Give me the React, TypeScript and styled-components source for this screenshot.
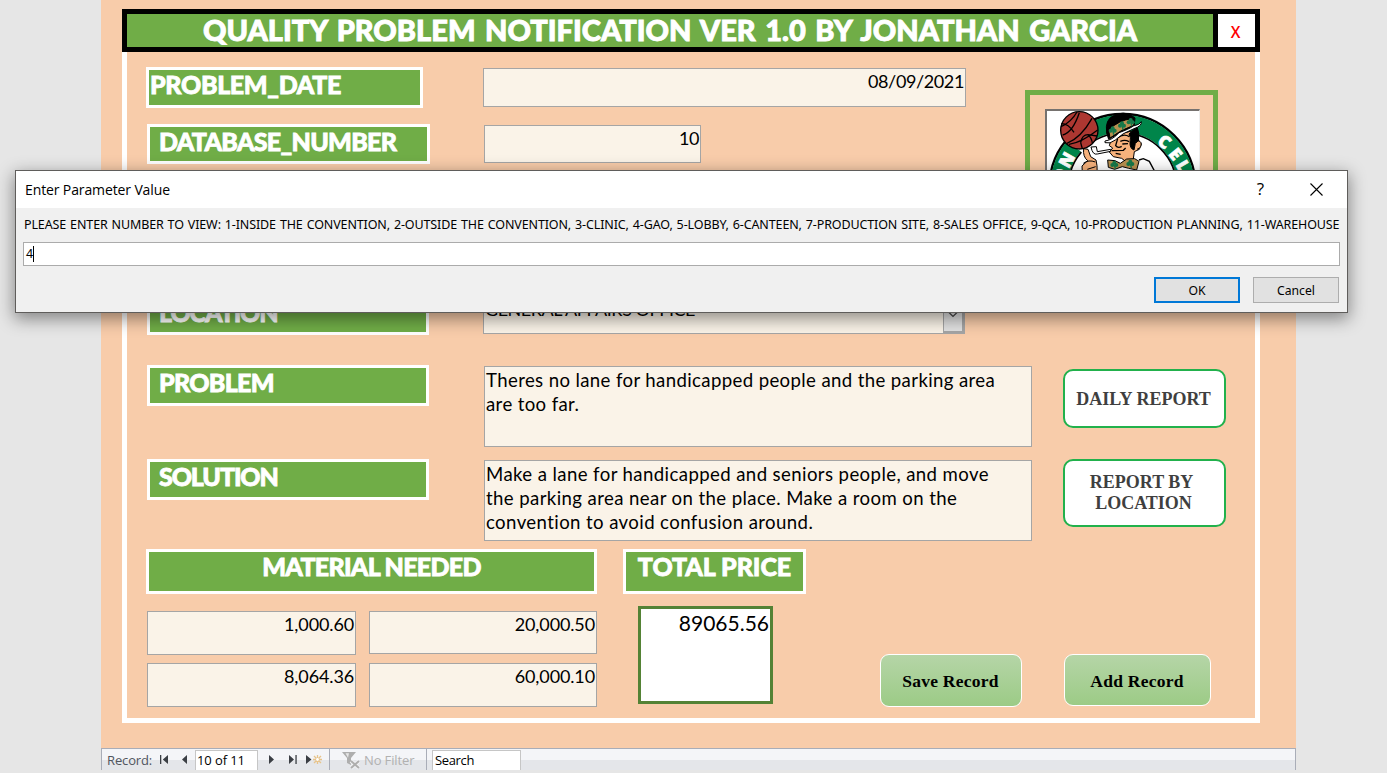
import React from 'react';
import styled, { createGlobalStyle } from 'styled-components';

const GlobalStyle = createGlobalStyle`
  * { box-sizing: border-box; }
  body { margin: 0; background: #e6e6e6; overflow: hidden; }
`;

const calibri = 'Lato, "Open Sans", sans-serif';
const segoe = '"Open Sans", "Noto Sans", sans-serif';
const tahoma = '"Noto Sans", "DejaVu Sans", sans-serif';

const Workspace = styled.div`
  position: relative;
  width: 1387px;
  height: 773px;
  padding-left: 101px;
  background: #e6e6e6;
  overflow: hidden;
`;

const Form = styled.main`
  width: 1195px;
  height: 748px;
  padding: 9px 36px 0 21px;
  background: #f8ccaa;
`;

const Header = styled.header`
  display: flex;
  gap: 5px;
  height: 43px;
  padding: 5px;
  background: #000;
`;

const Title = styled.h1`
  flex: 1;
  margin: 0;
  background: #70ad47;
  color: #fff;
  font: 900 29px/32px ${calibri};
  letter-spacing: 0;
  word-spacing: 2.6px;
  text-align: center;
  white-space: nowrap;
  -webkit-text-stroke: 0.9px #fff;
`;

const CloseForm = styled.button`
  width: 37px;
  padding: 2px 2px 0 0;
  border: 0;
  background: #fff;
  color: #f00;
  font: 600 15.5px/20px ${segoe};
`;

const Body = styled.section`
  display: flex;
  height: 671px;
  padding-top: 15px;
  border: 5px solid #fff;
  border-top: 0;
`;

const Records = styled.div`
  flex: none;
  width: 898px;
  padding-left: 19px;
`;

const Side = styled.aside`
  flex: 1;
  display: flex;
  flex-direction: column;
  align-items: flex-start;
  padding-top: 23px;
`;

const Row = styled.div<{ $h: number; $indent?: number }>`
  display: flex;
  align-items: flex-start;
  height: ${(p) => p.$h}px;
  padding-left: ${(p) => p.$indent ?? 0}px;
`;

const Label = styled.div<{ $w: number; $h: number; $pad?: number; $track?: number; $center?: boolean }>`
  flex: none;
  width: ${(p) => p.$w}px;
  height: ${(p) => p.$h}px;
  padding-left: ${(p) => p.$pad ?? 0}px;
  border: 3px solid #fff;
  background: #70ad47;
  color: #fff;
  font: 900 25px/29px ${calibri};
  letter-spacing: ${(p) => p.$track ?? -0.7}px;
  text-align: ${(p) => (p.$center ? 'center' : 'left')};
  white-space: nowrap;
  -webkit-text-stroke: 0.8px #fff;
`;

const Field = styled.div<{ $w: number; $h: number; $gap?: number; $right?: boolean; $track?: number }>`
  flex: none;
  width: ${(p) => p.$w}px;
  height: ${(p) => p.$h}px;
  margin: 1px 0 0 ${(p) => p.$gap ?? 0}px;
  padding: 0 1px;
  border: 1px solid #a5a5a5;
  background: #faf3e8;
  color: #000;
  font: 400 18px/24px ${calibri};
  letter-spacing: ${(p) => p.$track ?? 0}px;
  text-align: ${(p) => (p.$right ? 'right' : 'left')};
  white-space: pre;
`;

const Memo = styled(Field)`
  padding-top: 1px;
  font-size: 18.6px;
`;

const Combo = styled(Field)`
  display: flex;
  justify-content: space-between;
  padding-right: 0;
`;

const ComboArrow = styled.span`
  display: flex;
  justify-content: center;
  align-items: center;
  width: 21px;
  border: 1px solid #a5a5a5;
  border-right-width: 2px;
  border-bottom-width: 2px;
  background: #e1e1e1;
`;

const Amounts = styled.div`
  display: grid;
  grid-template-columns: 209px 228px;
  align-content: start;
  gap: 7px 13px;
  width: 451px;
  padding: 4px 0 0 1px;
`;

const Total = styled.output`
  width: 135px;
  height: 98px;
  margin-left: 41px;
  padding-right: 1px;
  border: 3px solid #548235;
  background: #fff;
  font: 400 21px/28px ${calibri};
  text-align: right;
`;

const LogoFrame = styled.div`
  width: 193px;
  height: 193px;
  padding: 14px 15px;
  border: 5px solid #70ad47;
`;

const LogoImage = styled.div`
  width: 155px;
  height: 155px;
  border: 1px solid #f0f0f0;
  border-top: 2px solid #76726f;
  border-left: 2px solid #76726f;
  background: #fff;
  overflow: hidden;
`;

const ReportButton = styled.button<{ $h: number; $top: number; $nudge?: number }>`
  width: 163px;
  height: ${(p) => p.$h}px;
  margin: ${(p) => p.$top}px 0 0 38px;
  padding: ${(p) => p.$nudge ?? 0}px 2px 0 0;
  border: 2px solid #22b14c;
  border-radius: 10px;
  background: #fff;
  color: #3f3f3f;
  font: 700 18px/21px "Liberation Serif", serif;
  white-space: pre;
`;

const ActionButton = styled.button<{ $w: number; $h: number; $left: number; $top: number }>`
  width: ${(p) => p.$w}px;
  height: ${(p) => p.$h}px;
  margin: ${(p) => p.$top}px 0 0 ${(p) => p.$left}px;
  padding: 1px 1px 0 0;
  border: 1px solid #fff;
  border-radius: 9px;
  background: linear-gradient(#b5d5a7, #9ccb86);
  color: #000;
  font: 700 17.5px/20px "Liberation Serif", serif;
  letter-spacing: 0.25px;
  white-space: nowrap;
`;

const NavBar = styled.nav`
  display: flex;
  align-items: stretch;
  width: 1195px;
  height: 22px;
  border: 1px solid #a9adb8;
  border-bottom: 0;
  background: linear-gradient(#f4f5f8 0 11px, #e4e6ea 11px);
  font: 400 13px/22px ${segoe};
  letter-spacing: -0.13px;
  color: #000;
  white-space: nowrap;
`;

const NavText = styled.span<{ $w: number; $muted?: boolean }>`
  width: ${(p) => p.$w}px;
  color: ${(p) => (p.$muted ? '#b1b1b1' : '#50555f')};
`;

const NavBox = styled.span<{ $w: number; $gap?: number; $track?: number; $pad?: number }>`
  width: ${(p) => p.$w}px;
  margin: 1px 0 0 ${(p) => p.$gap ?? 0}px;
  padding-left: ${(p) => p.$pad ?? 1}px;
  border: 1px solid #c6c6c6;
  border-bottom: 0;
  background: #fff;
  letter-spacing: ${(p) => p.$track ?? -0.1}px;
  line-height: 18px;
`;

const NavIcon = styled.svg`
  flex: none;
  height: 21px;
`;

const Divider = styled.i`
  width: 1px;
  background: #a9adb8;
`;

const Dialog = styled.div`
  position: absolute;
  left: 15px;
  top: 170px;
  width: 1333px;
  height: 143px;
  border: 1px solid #5f5d5b;
  background: #f0f0f0;
  box-shadow: 0 5px 16px 1px rgba(0, 0, 0, 0.42);
  color: #000;
  font: 400 12.5px/18px ${tahoma};
`;

const DialogTitle = styled.div`
  display: flex;
  align-items: center;
  height: 37px;
  padding: 0 24px 0 9px;
  background: #fff;
  font: 400 14px/20px ${segoe};
  letter-spacing: -0.12px;
`;

const HelpMark = styled.span`
  margin: -2px 46px 0 auto;
  font-size: 17px;
`;

const Prompt = styled.div`
  height: 34px;
  padding: 8px 0 0 8px;
  letter-spacing: -0.12px;
  word-spacing: 0.82px;
  white-space: nowrap;
`;

const Entry = styled.div`
  display: flex;
  align-items: center;
  width: 1317px;
  height: 24px;
  margin-left: 7px;
  padding-left: 2px;
  border: 1px solid #ababab;
  background: #fff;
`;

const Caret = styled.i`
  width: 1px;
  height: 16px;
  background: #000;
`;

const DialogActions = styled.div`
  display: flex;
  justify-content: flex-end;
  gap: 13px;
  padding: 11px 8px 0 0;
`;

const DialogButton = styled.button<{ $primary?: boolean }>`
  width: 86px;
  height: 26px;
  padding: 2px 0 0;
  border: ${(p) => (p.$primary ? '2px solid #0078d7' : '1px solid #adadad')};
  background: #e1e1e1;
  color: #000;
  font: 400 12.2px/18px ${tahoma};
`;

function TeamLogo() {
  return (
    <svg width="152" height="152" viewBox="141 333 456 456">
      <circle cx="367.5" cy="561" r="219" fill="#fff" stroke="#000" strokeWidth="7" />
      <circle cx="367.5" cy="561" r="190" fill="none" stroke="#00854a" strokeWidth="52" />
      <circle cx="367.5" cy="561" r="162" fill="#fff" stroke="#000" strokeWidth="5" />
      <g
        fill="#fff"
        stroke="#fff"
        strokeWidth="2"
        fontFamily='"Open Sans", sans-serif'
        fontWeight="800"
        fontSize="52"
        textAnchor="middle"
      >
        <text transform="translate(217 489) rotate(-61)">N</text>
        <text transform="translate(198 532) rotate(-72)">O</text>
        <text transform="translate(482 440) rotate(37)">C</text>
        <text transform="translate(512 474) rotate(51)">E</text>
        <text transform="translate(533 507) rotate(60)">L</text>
      </g>
      <g stroke="#000" strokeWidth="3">
        <path d="M205 430 L262 430 L330 425 L320 462 L262 475 L240 452Z" fill="#fff" stroke="none" />
        <path d="M251 446 Q248 470 263 482 L246 498 L248 540 L292 540 L291 497 L288 480 L272 470 L264 448Z" fill="#f7b27c" />
        <path d="M250 490 Q266 478 286 486 M262 508 L287 500 M254 526 L284 512" fill="none" />
        <path d="M384 480 L424 472 L430 482 L448 478 L468 520 L340 540 L318 500Z" fill="#fff" stroke="none" />
        <path d="M417 480 L430 476 L448 484 L464 514" fill="none" strokeWidth="4" />
        <circle cx="238" cy="391" r="56" fill="#ad3731" strokeWidth="4" />
        <path d="M183 380 Q213 367 231 336 M188 405 Q218 397 238 338 M184 371 Q204 370 222 397 M201 430 Q243 413 276 355 M207 433 Q244 428 293 390 M242 428 Q246 404 264 404 L291 408 M242 428 L247 446 M264 404 Q275 413 277 429" fill="none" strokeWidth="4" />
        <path d="M333 420 L328 437 L338 444 L328 456 L340 470 L365 475 L378 485 L399 483 L403 455 L418 448 L424 432 L416 421 L411 390 L360 401Z" fill="#f7b27c" />
        <path d="M387 402 L411 380 Q420 401 415 423 L407 425 L402 450 Q389 446 390 426 Q394 413 387 402Z" fill="#000" />
        <path d="M407 430 Q416 417 423 428 Q426 443 411 448" fill="#f7b27c" />
        <path d="M352 414 Q370 399 388 410 M361 424 Q375 418 387 425 M367 432 L384 431 M353 416 L347 437 Q354 446 365 439 M335 452 L370 451 L377 444 M347 460 L362 463" fill="none" strokeWidth="4" />
        <path d="M273 441 L289 440 L292 455 L332 448 L332 454 L292 462 Q278 466 273 441Z" fill="#fff" />
        <path d="M320 399 Q314 357 343 346 Q371 333 394 346 L405 354 L403 374 L360 398 L326 418Z" fill="#000" />
        <path d="M326 390 Q356 360 397 356 L402 376 Q366 387 330 414Z" fill="#b99150" />
        <path d="M315 423 Q338 420 357 398 Q388 387 400 378 Q420 374 424 365 Q426 378 402 386 Q365 400 346 420 Q330 433 315 428Z" fill="#fff" />
        <path d="M323 480 L345 482 L361 490 L380 477 L404 476 L417 484 L410 510 L386 505 L367 500 L344 508 L325 502Z" fill="#b99150" />
      </g>
      <g fill="#16794a">
        {[[338, 391], [366, 376], [392, 366], [343, 494], [391, 491]].map(([x, y]) => (
          <g key={`${x}-${y}`}>
            <circle cx={x - 6} cy={y + 1} r="6" />
            <circle cx={x + 6} cy={y + 1} r="6" />
            <circle cx={x} cy={y - 6} r="6" />
            <path d={`M${x - 2} ${y} h5 l2 13 h-4Z`} />
          </g>
        ))}
      </g>
    </svg>
  );
}

export default function App() {
  return (
    <Workspace>
      <GlobalStyle />
      <Form>
        <Header>
          <Title>QUALITY PROBLEM NOTIFICATION VER 1.0 BY JONATHAN GARCIA</Title>
          <CloseForm>X</CloseForm>
        </Header>
        <Body>
          <Records>
            <Row $h={57}>
              <Label $w={277} $h={41} $pad={1} $track={-0.34}>PROBLEM_DATE</Label>
              <Field $w={483} $h={39} $gap={60} $right $track={-0.38}>08/09/2021</Field>
            </Row>
            <Row $h={171} $indent={1}>
              <Label $w={283} $h={40} $pad={9}>DATABASE_NUMBER</Label>
              <Field $w={217} $h={38} $gap={54} $right $track={-0.4}>10</Field>
            </Row>
            <Row $h={70} $indent={1}>
              <Label $w={282} $h={40} $pad={9} $track={-1.1}>LOCATION</Label>
              <Combo $w={482} $h={38} $gap={54} $track={-0.48}>
                GENERAL AFFAIRS OFFICE
                <ComboArrow>
                  <svg width="10" height="7" viewBox="0 0 10 7">
                    <path d="M1 1.5 L5 5.5 L9 1.5" fill="none" stroke="#444" strokeWidth="1.2" />
                  </svg>
                </ComboArrow>
              </Combo>
            </Row>
            <Row $h={94} $indent={1}>
              <Label $w={282} $h={41} $pad={9} $track={-0.7}>PROBLEM</Label>
              <Memo $w={548} $h={81} $gap={55} $track={0.375}>
                {'Theres no lane for handicapped people and the parking area\nare too far.'}
              </Memo>
            </Row>
            <Row $h={90} $indent={1}>
              <Label $w={282} $h={41} $pad={9} $track={-1.1}>SOLUTION</Label>
              <Memo $w={548} $h={81} $gap={55} $track={0.4}>
                {'Make a lane for handicapped and seniors people, and move\nthe parking area near on the place. Make a room on the\nconvention to avoid confusion around.'}
              </Memo>
            </Row>
            <Row $h={57}>
              <Label $w={451} $h={45} $center>MATERIAL NEEDED</Label>
              <Row $h={45} $indent={26}>
                <Label $w={183} $h={45} $center $track={-0.04}>TOTAL PRICE</Label>
              </Row>
            </Row>
            <Row $h={101}>
              <Amounts>
                <Field $w={209} $h={44} $right $track={-0.13}>1,000.60</Field>
                <Field $w={228} $h={43} $right $track={-0.13}>20,000.50</Field>
                <Field $w={209} $h={44} $right $track={-0.13}>8,064.36</Field>
                <Field $w={228} $h={44} $right $track={-0.13}>60,000.10</Field>
              </Amounts>
              <Total>89065.56</Total>
              <ActionButton $w={142} $h={53} $left={107} $top={48}>Save Record</ActionButton>
            </Row>
          </Records>
          <Side>
            <LogoFrame>
              <LogoImage>
                <TeamLogo />
              </LogoImage>
            </LogoFrame>
            <ReportButton $h={59} $top={86} $nudge={2}>DAILY REPORT</ReportButton>
            <ReportButton $h={68} $top={31}>{'REPORT BY \n LOCATION '}</ReportButton>
            <ActionButton $w={147} $h={52} $left={39} $top={127}>Add Record</ActionButton>
          </Side>
        </Body>
      </Form>
      <NavBar>
        <NavIcon width="5" />
        <NavText $w={50}>Record:</NavText>
        <NavIcon width="38" viewBox="0 0 38 21" fill="#3b3f45">
          <path d="M3 6h1.3v9H3zM11 6v9L5.8 10.5zM30 6v9l-5-4.5z" />
        </NavIcon>
        <NavBox $w={63}>10 of 11</NavBox>
        <NavIcon width="71" viewBox="0 0 71 21" fill="#3b3f45">
          <path d="M11 6v9l5-4.5zM31 6v9l5-4.5zM37.4 6h1.3v9h-1.3zM48 6v9l5.5-4.5z" />
          <path
            d="M59.5 6v9M55 10.5h9M56 7l7 7M63 7l-7 7"
            stroke="#e7c48c"
            strokeWidth="1.3"
          />
          <circle cx="59.5" cy="10.5" r="1.4" fill="#fff" />
        </NavIcon>
        <Divider />
        <NavIcon width="34" viewBox="0 0 34 21">
          <path d="M12 3h14l-5 6v7l-4-2V9z" fill="#aeaeae" />
          <path d="M15.500 4.2h3.5l-1 4.5z" fill="#e8e8e8" />
          <path d="M21 12l8 7M29 12l-8 7" stroke="#f0f1f4" strokeWidth="4" />
          <path d="M21 12l8 7M29 12l-8 7" stroke="#aeaeae" strokeWidth="2" />
        </NavIcon>
        <NavText $w={62} $muted>No Filter</NavText>
        <Divider />
        <NavBox $w={89} $gap={5} $track={-0.35} $pad={2}>Search</NavBox>
      </NavBar>
      <Dialog>
        <DialogTitle>
          Enter Parameter Value
          <HelpMark>?</HelpMark>
          <svg width="13" height="13" viewBox="0 0 13 13">
            <path d="M.5 .5l12 12M12.500 .5l-12 12" stroke="#000" strokeWidth="1.1" />
          </svg>
        </DialogTitle>
        <Prompt>
          PLEASE ENTER NUMBER TO VIEW: 1-INSIDE THE CONVENTION, 2-OUTSIDE THE CONVENTION, 3-CLINIC, 4-GAO, 5-LOBBY,
          6-CANTEEN, 7-PRODUCTION SITE, 8-SALES OFFICE, 9-QCA, 10-PRODUCTION PLANNING, 11-WAREHOUSE
        </Prompt>
        <Entry>
          4<Caret />
        </Entry>
        <DialogActions>
          <DialogButton $primary>OK</DialogButton>
          <DialogButton>Cancel</DialogButton>
        </DialogActions>
      </Dialog>
    </Workspace>
  );
}
